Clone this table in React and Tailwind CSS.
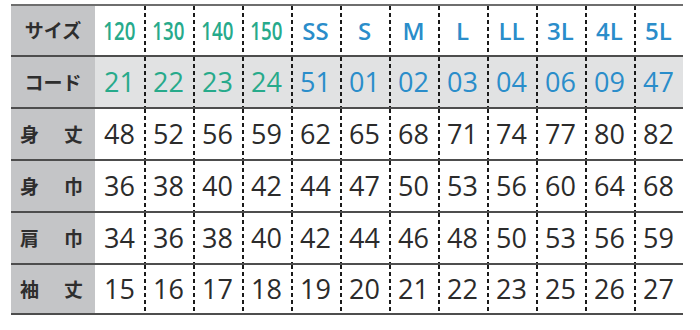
import React from "react";

const TEAL = "text-[#27aa8b]";
const BLUE = "text-[#2a8dca]";

const sizes = [
  { t: "120", c: TEAL, n: true },
  { t: "130", c: TEAL, n: true },
  { t: "140", c: TEAL, n: true },
  { t: "150", c: TEAL, n: true },
  { t: "SS", c: BLUE },
  { t: "S", c: BLUE },
  { t: "M", c: BLUE },
  { t: "L", c: BLUE },
  { t: "LL", c: BLUE },
  { t: "3L", c: BLUE },
  { t: "4L", c: BLUE },
  { t: "5L", c: BLUE },
];

const codes = ["21", "22", "23", "24", "51", "01", "02", "03", "04", "06", "09", "47"];

const rows = [
  { a: "身", b: "丈", v: [48, 52, 56, 59, 62, 65, 68, 71, 74, 77, 80, 82], h: "h-[52px]" },
  { a: "身", b: "巾", v: [36, 38, 40, 42, 44, 47, 50, 53, 56, 60, 64, 68], h: "h-[52px]" },
  { a: "肩", b: "巾", v: [34, 36, 38, 40, 42, 44, 46, 48, 50, 53, 56, 59], h: "h-[52px]" },
  { a: "袖", b: "丈", v: [15, 16, 17, 18, 19, 20, 21, 22, 23, 25, 26, 27], h: "h-[50px]" },
];

const dash =
  "bg-[linear-gradient(to_bottom,#1a1a1a_55%,transparent_55%)] bg-[length:2px_7px] bg-repeat-y bg-[position:-0.5px_0]";

function Cell({ i, children, extra = "" }) {
  return (
    <div
      className={`flex-1 flex items-center justify-center ${i > 0 ? dash : ""} ${extra}`}
    >
      {children}
    </div>
  );
}

const label =
  "w-[84px] shrink-0 bg-[#c4c5c7] flex items-center text-[#2e2e2e] text-[19px] font-bold";
const jp = { fontFamily: '"Noto Sans CJK JP", "Noto Sans", sans-serif' };

export default function App() {
  return (
    <div className="w-[700px] h-[330px] bg-white pt-[4px] pl-[11px]" style={{ fontFamily: '"Open Sans", "Noto Sans", sans-serif' }}>
      <div className="w-[672px] border-t-2 border-[#6e6e6e]">
        {/* size row */}
        <div className="flex h-[51px] border-b-2 border-[#4d4d4d]">
          <div className={`${label} justify-center`} style={jp}>
            サイズ
          </div>
          <div className="flex flex-1 bg-white">
            {sizes.map((s, i) => (
              <Cell key={i} i={i}>
                {s.n ? (
                  <span className={`inline-block [transform:scaleX(0.72)] text-[26px] font-semibold ${s.c}`}>{s.t}</span>
                ) : (
                  <span className={`text-[24px] font-semibold ${s.c}`}>{s.t}</span>
                )}
              </Cell>
            ))}
          </div>
        </div>
        {/* code row */}
        <div className="flex h-[52px] border-b-2 border-[#4d4d4d]">
          <div className={`${label} justify-center`} style={jp}>
            コード
          </div>
          <div className="flex flex-1 bg-[#e1e2e3]">
            {codes.map((c, i) => (
              <Cell key={i} i={i}>
                <span className={`text-[27px] ${i < 4 ? TEAL : BLUE}`}>{c}</span>
              </Cell>
            ))}
          </div>
        </div>
        {rows.map((r, ri) => (
          <div key={ri} className={`flex ${r.h} border-b-2 border-[#4d4d4d]`}>
            <div className={`${label} justify-between pl-[9px] pr-[12px]`} style={jp}>
              <span>{r.a}</span>
              <span>{r.b}</span>
            </div>
            <div className="flex flex-1 bg-white">
              {r.v.map((v, i) => (
                <Cell key={i} i={i}>
                  <span className="text-[27px] text-[#2b2b2b]">{v}</span>
                </Cell>
              ))}
            </div>
          </div>
        ))}
      </div>
    </div>
  );
}
